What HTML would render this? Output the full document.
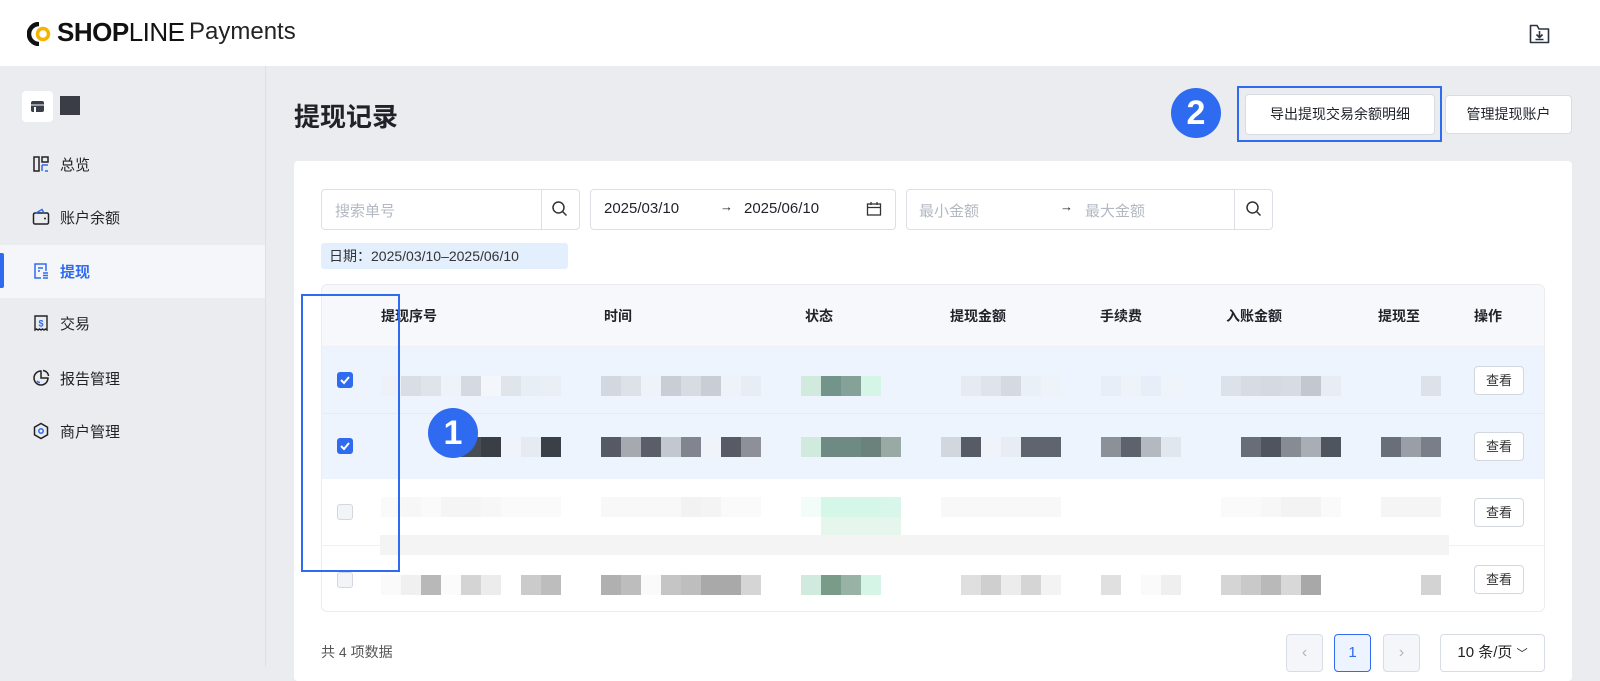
<!DOCTYPE html>
<html><head><meta charset="utf-8"><style>
*{margin:0;padding:0;box-sizing:border-box}
body{width:1600px;height:667px;overflow:hidden;background:#ebecf0;font-family:"Liberation Sans","Noto Sans CJK SC",sans-serif;color:#1f2329;position:relative}
.a{position:absolute}
.hdr{left:0;top:0;width:1600px;height:66px;background:#fff}
.side{left:0;top:66px;width:266px;height:601px;background:#ebecf0;border-right:1px solid #dfe0e4}
.nav{left:0;width:265px;height:52px;font-size:15px;display:flex;align-items:center;padding-left:60px}
.ico{position:absolute;left:32px;top:17px;width:18px;height:18px}
.card{left:294px;top:161px;width:1278px;height:520px;background:#fff;border-radius:4px}
.inp{border:1px solid #dcdfe6;border-radius:4px;background:#fff;height:41px;top:189px}
.ph{color:#b3b8c2;font-size:15px}
.th{font-size:14px;font-weight:bold;color:#1f2329;top:306px}
.cb{width:16px;height:16px;border-radius:3px;left:337px}
.cb.on{background:#2e6bf0}
.cb.off{border:1px solid #d3d7e0;background:#f3f4f7}
.btnv{left:1474px;width:50px;height:29px;border:1px solid #d3d7e0;border-radius:4px;background:#fff;font-size:13px;text-align:center;line-height:27px;color:#333}
.bl{height:20px}
.pg{top:634px;height:38px;border:1px solid #d8dce5;border-radius:4px;background:#f5f6fa;text-align:center;line-height:36px;color:#b0b5c0;font-size:16px}
</style></head><body>
<div class="a hdr"></div>
<svg class="a" style="left:27px;top:22px" width="26" height="24" viewBox="0 0 26 24"><path d="M12 2 A10 10 0 1 0 12 22" fill="none" stroke="#111" stroke-width="4.5"/><circle cx="16" cy="12" r="5.5" fill="none" stroke="#f5b400" stroke-width="3.5"/></svg>
<div class="a" style="left:57px;top:17px;font-size:26px;font-weight:bold;letter-spacing:-0.5px;color:#111">SHOP<span style="font-weight:normal">LINE</span></div>
<div class="a" style="left:189px;top:18px;font-size:24px;color:#222">Payments</div>
<svg class="a" style="left:1529px;top:24px" width="21" height="20" viewBox="0 0 21 20"><path d="M1.5 3 V18.5 H19.5 V5 H10 L8 1.5 H1.5 Z" fill="none" stroke="#2b3240" stroke-width="1.6" stroke-linejoin="round"/><path d="M10.5 7 V13 M7.5 10.5 L10.5 13.5 L13.5 10.5 M6.5 15.5 H14.5" fill="none" stroke="#2b3240" stroke-width="1.6"/></svg>

<div class="a side"></div>
<div class="a" style="left:22px;top:91px;width:31px;height:31px;background:#fff;border-radius:4px"></div>
<svg class="a" style="left:30px;top:99px" width="15" height="15" viewBox="0 0 15 15"><rect x="1" y="2" width="13" height="11" rx="2" fill="#3a3e48"/><path d="M1 6 H14" stroke="#fff" stroke-width="1"/><rect x="4" y="8" width="2" height="5" fill="#fff"/></svg>
<div class="a" style="left:60px;top:96px;width:20px;height:19px;background:#3a3d46"></div>

<div class="a" style="left:0;top:245px;width:265px;height:53px;background:#f5f6fa"></div>
<div class="a" style="left:0;top:253px;width:4px;height:35px;background:#2e6bf0;border-radius:0 2px 2px 0"></div>

<div class="a nav" style="top:138px"><svg class="ico" viewBox="0 0 18 18"><rect x="2" y="2" width="5" height="14" fill="none" stroke="#222" stroke-width="1.5"/><rect x="10" y="2" width="6" height="5" fill="none" stroke="#222" stroke-width="1.5"/><path d="M10 10 H16 M10 10 V16 M13 16 H16" stroke="#2e6bf0" stroke-width="1.5"/></svg>总览</div>
<div class="a nav" style="top:191px"><svg class="ico" viewBox="0 0 18 18"><rect x="1.5" y="5" width="15" height="11" rx="1.5" fill="none" stroke="#222" stroke-width="1.5"/><path d="M4 5 L10 1.5 L12 5" fill="none" stroke="#2e6bf0" stroke-width="1.5"/><circle cx="13" cy="10.5" r="1" fill="#222"/></svg>账户余额</div>
<div class="a nav" style="top:245px;color:#2e6bf0;font-weight:bold"><svg class="ico" viewBox="0 0 18 18"><path d="M14 9 V2 H3 V16 H9" fill="none" stroke="#2e6bf0" stroke-width="1.5"/><path d="M6 6 H11 M6 9 H8 M11 11 H16 M11 13.5 H16 M11 16 H16" stroke="#2e6bf0" stroke-width="1.4"/></svg>提现</div>
<div class="a nav" style="top:297px"><svg class="ico" viewBox="0 0 18 18"><path d="M3 2 H15 V16 L13.5 15 L12 16 L10.5 15 L9 16 L7.5 15 L6 16 L4.5 15 L3 16 Z" fill="none" stroke="#222" stroke-width="1.4"/><text x="9" y="12.5" font-size="9" text-anchor="middle" fill="#2e6bf0" font-family="Liberation Sans" font-weight="bold">$</text></svg>交易</div>
<div class="a nav" style="top:352px"><svg class="ico" viewBox="0 0 18 18"><path d="M9 2 A7 7 0 1 0 16 9 H9 Z" fill="none" stroke="#222" stroke-width="1.5"/><path d="M11 1.5 A6 6 0 0 1 16.5 7" fill="none" stroke="#222" stroke-width="1.5"/><path d="M5 12 A4 4 0 0 0 8 13.5" fill="none" stroke="#2e6bf0" stroke-width="1.5"/></svg>报告管理</div>
<div class="a nav" style="top:405px"><svg class="ico" viewBox="0 0 18 18"><path d="M9 1.5 L15.5 5.2 V12.8 L9 16.5 L2.5 12.8 V5.2 Z" fill="none" stroke="#222" stroke-width="1.5"/><circle cx="9" cy="9" r="2.2" fill="none" stroke="#2e6bf0" stroke-width="1.5"/></svg>商户管理</div>

<div class="a" style="left:294px;top:97px;font-size:26px;font-weight:bold;color:#1f2329">提现记录</div>
<div class="a" style="left:1171px;top:88px;width:50px;height:50px;border-radius:50%;background:#2e6bf0;color:#fff;font-size:34px;font-weight:bold;text-align:center;line-height:50px">2</div>
<div class="a" style="left:1237px;top:86px;width:205px;height:56px;border:2px solid #2e6bf0"></div>
<div class="a" style="left:1245px;top:94px;width:190px;height:41px;background:#fff;border:1px solid #d8dce5;border-radius:4px;font-size:14px;text-align:center;line-height:39px">导出提现交易余额明细</div>
<div class="a" style="left:1445px;top:95px;width:127px;height:39px;background:#fff;border:1px solid #d8dce5;border-radius:4px;font-size:14px;text-align:center;line-height:37px">管理提现账户</div>

<div class="a card"></div>
<div class="a inp" style="left:321px;width:259px"></div>
<div class="a ph" style="left:335px;top:200px">搜索单号</div>
<div class="a" style="left:541px;top:189px;width:1px;height:41px;background:#dcdfe6"></div>
<svg class="a" style="left:551px;top:200px" width="18" height="18" viewBox="0 0 18 18"><circle cx="7.5" cy="7.5" r="5.5" fill="none" stroke="#333" stroke-width="1.5"/><path d="M11.5 11.5 L15.5 15.5" stroke="#333" stroke-width="1.5"/></svg>
<div class="a inp" style="left:590px;width:306px"></div>
<div class="a" style="left:604px;top:200px;font-size:15px">2025/03/10</div>
<div class="a" style="left:720px;top:199px;font-size:13px">→</div>
<div class="a" style="left:744px;top:200px;font-size:15px">2025/06/10</div>
<svg class="a" style="left:866px;top:201px" width="16" height="16" viewBox="0 0 16 16"><rect x="1.5" y="3" width="13" height="11" fill="none" stroke="#333" stroke-width="1.3"/><path d="M1.5 6.5 H14.5 M5 1 V4 M11 1 V4" stroke="#333" stroke-width="1.3"/></svg>
<div class="a inp" style="left:906px;width:367px"></div>
<div class="a ph" style="left:919px;top:200px">最小金额</div>
<div class="a" style="left:1060px;top:199px;font-size:13px">→</div>
<div class="a ph" style="left:1085px;top:200px">最大金额</div>
<div class="a" style="left:1234px;top:189px;width:1px;height:41px;background:#dcdfe6"></div>
<svg class="a" style="left:1245px;top:200px" width="18" height="18" viewBox="0 0 18 18"><circle cx="7.5" cy="7.5" r="5.5" fill="none" stroke="#333" stroke-width="1.5"/><path d="M11.5 11.5 L15.5 15.5" stroke="#333" stroke-width="1.5"/></svg>
<div class="a" style="left:321px;top:243px;width:247px;height:26px;background:#e3effd;border-radius:3px;font-size:14px;line-height:26px;padding-left:8px;color:#333">日期：2025/03/10–2025/06/10</div>

<div class="a" style="left:321px;top:284px;width:1224px;height:328px;border:1px solid #eaecf0;border-radius:6px;background:#fff;overflow:hidden">
  <div class="a" style="left:0;top:0;width:1224px;height:62px;background:#f7f8fb;border-bottom:1px solid #eef0f3"></div>
  <div class="a" style="left:0;top:62px;width:1224px;height:67px;background:#eef4fd;border-bottom:1px solid #e6ecf5"></div>
  <div class="a" style="left:0;top:129px;width:1224px;height:65px;background:#eef4fd"></div>
  <div class="a" style="left:0;top:260px;width:1224px;height:1px;background:#eef0f3"></div>
</div>
<div class="a th" style="left:381px">提现序号</div>
<div class="a th" style="left:604px">时间</div>
<div class="a th" style="left:805px">状态</div>
<div class="a th" style="left:950px">提现金额</div>
<div class="a th" style="left:1100px">手续费</div>
<div class="a th" style="left:1226px">入账金额</div>
<div class="a th" style="left:1378px">提现至</div>
<div class="a th" style="left:1474px">操作</div>

<div class="a bl" style="top:376px;left:381px;width:180px;background:linear-gradient(to right,#eef2f8 0 20px,#d9dee6 20px 40px,#dfe3ea 40px 60px,#eef3fa 60px 80px,#d5dae2 80px 100px,#f3f6fb 100px 120px,#e0e5ec 120px 140px,#e8eef6 140px 160px,#eaeff6 160px)"></div>
<div class="a bl" style="top:376px;left:601px;width:160px;background:linear-gradient(to right,#d3d8e0 0 20px,#dde1e8 20px 40px,#eef3fa 40px 60px,#c9ced6 60px 80px,#d7dce3 80px 100px,#c9ced6 100px 120px,#eef3fa 120px 140px,#e8edf5 140px)"></div>
<div class="a bl" style="top:376px;left:801px;width:80px;background:linear-gradient(to right,#d0eadd 0 20px,#72948a 20px 40px,#86a197 40px 60px,#d5f5e6 60px)"></div>
<div class="a bl" style="top:376px;left:961px;width:100px;background:linear-gradient(to right,#e6ebf3 0 20px,#dfe4ec 20px 40px,#d5dae2 40px 60px,#eaf0f8 60px 80px,#eef3fa 80px)"></div>
<div class="a bl" style="top:376px;left:1101px;width:80px;background:linear-gradient(to right,#e8eef7 0 20px,#eef3fa 20px 40px,#e8eef7 40px 60px,#eff4fb 60px)"></div>
<div class="a bl" style="top:376px;left:1221px;width:120px;background:linear-gradient(to right,#dde2ea 0 20px,#d7dce4 20px 40px,#d5dae2 40px 60px,#d7dce4 60px 80px,#c3c8d0 80px 100px,#e8edf5 100px)"></div>
<div class="a bl" style="top:376px;left:1421px;width:20px;background:#dde2ea"></div>
<div class="a bl" style="top:437px;left:461px;width:100px;background:linear-gradient(to right,#484c55 0 20px,#3a3e47 20px 40px,#f0f4fa 40px 60px,#e6eaf2 60px 80px,#3b3f48 80px)"></div>
<div class="a bl" style="top:437px;left:601px;width:160px;background:linear-gradient(to right,#555a64 0 20px,#a6a9b0 20px 40px,#5a5e68 40px 60px,#c3c7cf 60px 80px,#80858f 80px 100px,#f0f4fa 100px 120px,#575b65 120px 140px,#8d9099 140px)"></div>
<div class="a bl" style="top:437px;left:801px;width:100px;background:linear-gradient(to right,#d0eadd 0 20px,#6e8a82 20px 60px,#6b817c 60px 80px,#98aaa3 80px)"></div>
<div class="a bl" style="top:437px;left:941px;width:120px;background:linear-gradient(to right,#d2d7df 0 20px,#575b65 20px 40px,#f0f4fa 40px 60px,#e8ecf4 60px 80px,#60646e 80px)"></div>
<div class="a bl" style="top:437px;left:1101px;width:80px;background:linear-gradient(to right,#8c9098 0 20px,#5e626c 20px 40px,#b4b8c0 40px 60px,#e2e6ee 60px)"></div>
<div class="a bl" style="top:437px;left:1241px;width:100px;background:linear-gradient(to right,#696d77 0 20px,#50545e 20px 40px,#878b94 40px 60px,#a9adb5 60px 80px,#50545e 80px)"></div>
<div class="a bl" style="top:437px;left:1381px;width:60px;background:linear-gradient(to right,#6a6e78 0 20px,#9a9ea6 20px 40px,#7a7e88 40px)"></div>
<div class="a bl" style="top:497px;left:381px;width:180px;background:linear-gradient(to right,#fafafa 0 20px,#f7f7f8 20px 40px,#fafafa 40px 60px,#f5f5f6 60px 100px,#f7f7f8 100px 120px,#fafafa 120px)"></div>
<div class="a bl" style="top:497px;left:601px;width:160px;background:linear-gradient(to right,#f8f8f9 0 80px,#f2f2f3 80px 100px,#f4f4f5 100px 120px,#fafafa 120px)"></div>
<div class="a bl" style="top:497px;left:801px;width:100px;background:linear-gradient(to right,#f2fcf8 0 20px,#d5f7e7 20px 80px,#d8f7ea 80px)"></div>
<div class="a bl" style="top:517px;left:821px;width:80px;background:#e6f6ed"></div>
<div class="a bl" style="top:497px;left:941px;width:120px;background:#f8f8f9"></div>
<div class="a bl" style="top:497px;left:1221px;width:120px;background:linear-gradient(to right,#fafafa 0 40px,#f7f7f7 40px 60px,#f3f3f4 60px 100px,#fafafa 100px)"></div>
<div class="a bl" style="top:497px;left:1381px;width:60px;background:#f5f5f6"></div>
<div class="a bl" style="top:535px;left:380px;width:1069px;background:#f4f4f4"></div>
<div class="a bl" style="top:575px;left:381px;width:180px;background:linear-gradient(to right,#fafafa 0 20px,#f0f0f1 20px 40px,#b8b8b8 40px 60px,#fbfbfb 60px 80px,#d4d4d5 80px 100px,#ececed 100px 120px,#fff 120px 140px,#cbcbcb 140px 160px,#bdbdbd 160px)"></div>
<div class="a bl" style="top:575px;left:601px;width:160px;background:linear-gradient(to right,#b0b0b0 0 20px,#bdbdbd 20px 40px,#fafafa 40px 60px,#c5c5c6 60px 80px,#bebebe 80px 100px,#a9a9a9 100px 140px,#d5d5d6 140px)"></div>
<div class="a bl" style="top:575px;left:801px;width:80px;background:linear-gradient(to right,#d0eadd 0 20px,#7a9a8a 20px 40px,#98b3a6 40px 60px,#d5f5e6 60px)"></div>
<div class="a bl" style="top:575px;left:961px;width:100px;background:linear-gradient(to right,#dfdfdf 0 20px,#cfcfcf 20px 40px,#ececed 40px 60px,#d5d5d6 60px 80px,#f3f3f4 80px)"></div>
<div class="a bl" style="top:575px;left:1101px;width:80px;background:linear-gradient(to right,#e0e0e1 0 20px,#fff 20px 40px,#fafafa 40px 60px,#efeff0 60px)"></div>
<div class="a bl" style="top:575px;left:1221px;width:100px;background:linear-gradient(to right,#d5d5d5 0 20px,#c9c9c9 20px 40px,#b9b9b9 40px 60px,#d8d8d8 60px 80px,#a8a8a8 80px)"></div>
<div class="a bl" style="top:575px;left:1421px;width:20px;background:#d3d3d3"></div>

<div class="a cb on" style="top:372px"><svg width="16" height="16" viewBox="0 0 16 16"><path d="M4 8 L7 11 L12 5" fill="none" stroke="#fff" stroke-width="2"/></svg></div>
<div class="a cb on" style="top:438px"><svg width="16" height="16" viewBox="0 0 16 16"><path d="M4 8 L7 11 L12 5" fill="none" stroke="#fff" stroke-width="2"/></svg></div>
<div class="a cb off" style="top:504px"></div>
<div class="a cb off" style="top:572px"></div>
<div class="a btnv" style="top:366px">查看</div>
<div class="a btnv" style="top:432px">查看</div>
<div class="a btnv" style="top:498px">查看</div>
<div class="a btnv" style="top:565px">查看</div>

<div class="a" style="left:301px;top:294px;width:99px;height:278px;border:2px solid #2e6bf0"></div>
<div class="a" style="left:428px;top:408px;width:50px;height:50px;border-radius:50%;background:#2e6bf0;color:#fff;font-size:34px;font-weight:bold;text-align:center;line-height:50px">1</div>

<div class="a" style="left:321px;top:642px;font-size:14px;color:#555">共 4 项数据</div>
<div class="a pg" style="left:1286px;width:37px">‹</div>
<div class="a pg" style="left:1334px;width:37px;border-color:#2e6bf0;background:#eef4ff;color:#2e6bf0;font-size:15px">1</div>
<div class="a pg" style="left:1383px;width:37px">›</div>
<div class="a pg" style="left:1440px;width:105px;background:#fff;color:#222;font-size:15px">10 条/页 <span style="font-size:11px">﹀</span></div>
</body></html>
